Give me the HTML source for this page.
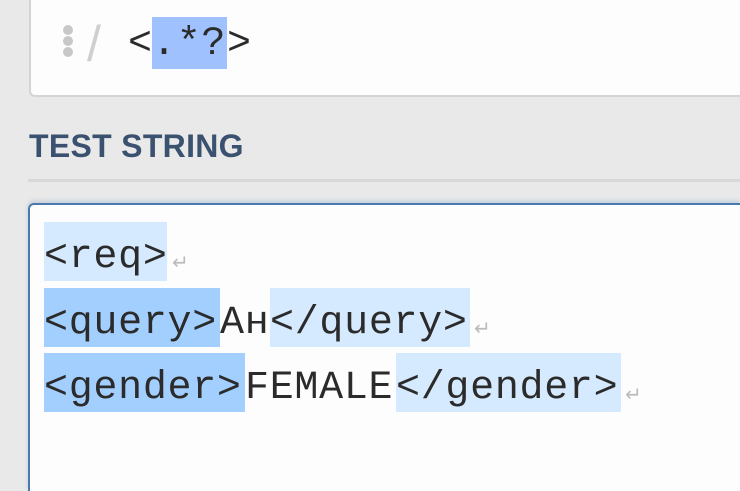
<!DOCTYPE html>
<html><head><style>
html,body{margin:0;width:740px;height:491px;overflow:hidden}
body{background:#e9e9e9;position:relative;font-family:"Liberation Sans",sans-serif}
.top{position:absolute;left:29px;top:0;width:711px;height:97px;background:#fdfdfd;border:2px solid #d4d4d4;border-top:none;border-right:none;border-radius:0 0 0 6px;box-sizing:border-box}
.m{font-family:"Liberation Mono",monospace;font-size:40px;letter-spacing:0.7px;color:#2b2b2b;position:absolute;white-space:pre;height:59px;line-height:72px;overflow:visible}
.l{background:#d6eaff}.d{background:#a3cfff}
.rh{background:#9fc2ff}
.ret{position:absolute;color:#bbb;font-size:20px;font-family:"DejaVu Sans",sans-serif}
.dot{position:absolute;left:63px;width:10px;height:10px;border-radius:50%;background:#c8c8c8}
h2{position:absolute;left:29px;top:128px;margin:0;font-size:32px;font-weight:bold;color:#3b5170;letter-spacing:0.3px}
.hr{position:absolute;left:28px;top:179px;width:712px;height:3px;background:#d8d8d8}
.box{position:absolute;left:28px;top:203px;width:712px;height:288px;background:#fdfdfd;border:2px solid #4a79ae;border-bottom:none;border-right:none;border-radius:6px 0 0 0;box-sizing:border-box;box-shadow:0 -2px 4px rgba(74,121,174,.25)}
</style></head><body>
<div class="top"></div>
<div class="dot" style="top:25px"></div><div class="dot" style="top:36px"></div><div class="dot" style="top:47px"></div>
<div style="position:absolute;left:87px;top:15px;font-size:50px;color:#cfcfcf">/</div>
<div class="m" style="left:128px;top:17px;line-height:56px">&lt;</div>
<div class="m rh" style="left:152px;top:17px;width:75px;height:52px;line-height:56px">.*?</div>
<div class="m" style="left:227px;top:17px;line-height:56px">&gt;</div>
<h2>TEST STRING</h2>
<div class="hr"></div>
<div class="box"></div>
<div class="m l" style="left:44px;top:222px;width:123px">&lt;req&gt;</div>
<div class="ret" style="left:172px;top:250px">↵</div>
<div class="m d" style="left:44px;top:288px;width:176px">&lt;query&gt;</div>
<div class="m" style="left:220px;top:288px">Ан</div>
<div class="m l" style="left:270px;top:288px;width:200px">&lt;/query&gt;</div>
<div class="ret" style="left:474px;top:316px">↵</div>
<div class="m d" style="left:44px;top:353px;width:201px">&lt;gender&gt;</div>
<div class="m" style="left:245px;top:353px">FEMALE</div>
<div class="m l" style="left:396px;top:353px;width:225px">&lt;/gender&gt;</div>
<div class="ret" style="left:625px;top:382px">↵</div>
</body></html>
